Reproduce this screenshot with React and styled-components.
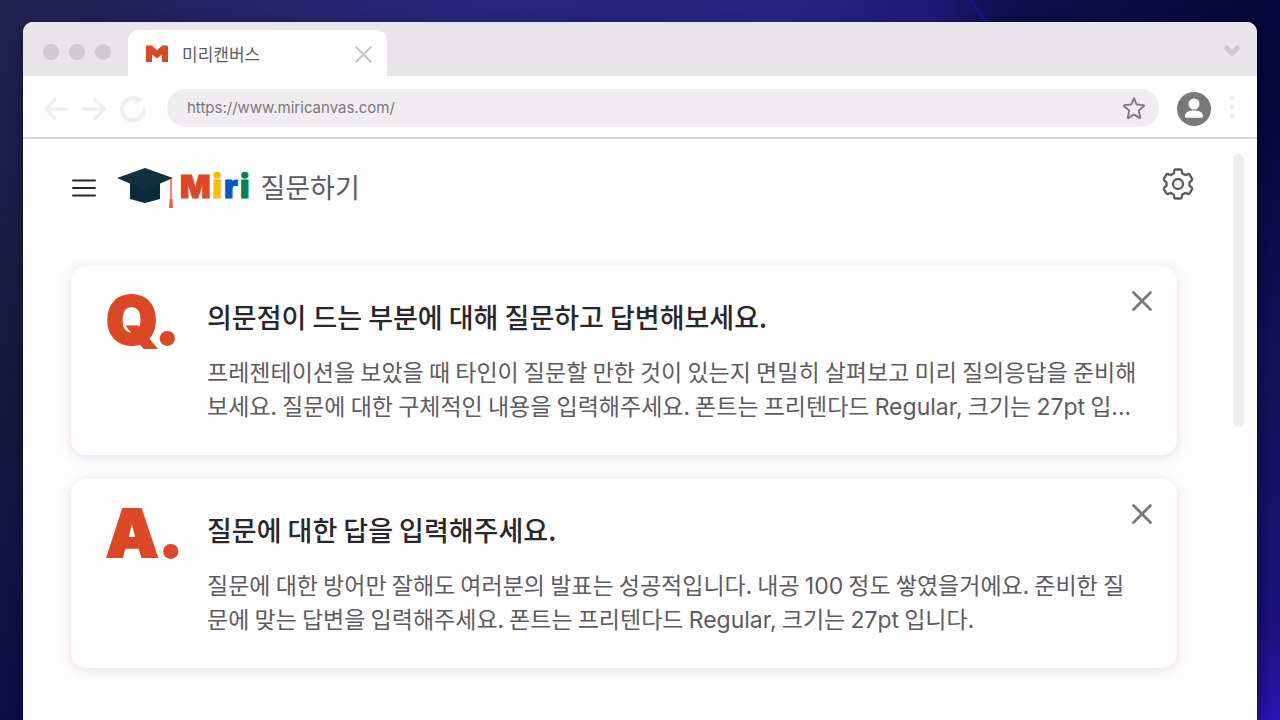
import React from "react";
import styled, { createGlobalStyle } from "styled-components";

const Global = createGlobalStyle`
  * { box-sizing: border-box; }
  html, body, #root { height: 100%; }
  body {
    margin: 0;
    overflow: hidden;
    font-family: "Noto Sans CJK KR", "Noto Sans", sans-serif;
    color: #5d5b60;
  }
  button { border: 0; padding: 0; background: none; cursor: pointer; font: inherit; color: inherit; }
  h1, h2, p { margin: 0; font-weight: 400; }
  svg { display: block; }
`;

const Desktop = styled.div`
  min-height: 100%;
  display: flex;
  overflow: hidden;
  padding: 22px 23px 0;
  background:
    linear-gradient(55deg, transparent 44%, #190e9c 50%, transparent 56%) calc(100% - 285px) 0 / 32px 24px no-repeat,
    linear-gradient(180deg, transparent 100px, #16125c 400px, #1c107c 620px, #2c14b0 720px) 100% 0 / 40px 100% no-repeat,
    linear-gradient(180deg, transparent 40px, #16183e 400px, #100c48 720px) 0 0 / 40px 100% no-repeat,
    linear-gradient(90deg, #20204e 0%, #222058 8%, #28267c 35%, #282480 62%, #1e1874 73%, #10104e 78%, #07073c 97%, #06063e 100%);
`;

const Browser = styled.main`
  flex: 1;
  min-width: 0;
  display: flex;
  flex-direction: column;
  border-radius: 10px 10px 0 0;
  overflow: hidden;
  background: #fefdfe;
  box-shadow: 2px 6px 14px rgba(0, 0, 20, 0.5);
`;

const TabStrip = styled.div`
  height: 54px;
  flex: none;
  display: flex;
  align-items: flex-end;
  padding: 0 16px 0 20px;
  background: #e7e5e8;
`;

const Lights = styled.div`
  display: flex;
  gap: 10px;
  align-self: center;
  padding-top: 6px;
  margin-right: 17px;
`;

const Light = styled.span`
  width: 16px;
  height: 16px;
  border-radius: 50%;
  background: #cdcbce;
`;

const Tab = styled.div`
  width: 259px;
  height: 46px;
  display: flex;
  align-items: center;
  gap: 14px;
  padding: 2px 14px 0 18px;
  border-radius: 10px 10px 0 0;
  background: #fefdfe;
  font-size: 17px;
  line-height: 24px;
`;

const TabTitle = styled.span`
  flex: 1;
`;

const StripMenu = styled.button`
  margin: 0 0 18px auto;
`;

const Toolbar = styled.div`
  height: 63px;
  flex: none;
  display: flex;
  align-items: center;
  padding: 0 22px 0 20px;
  border-bottom: 2px solid #d9d7db;
`;

const NavGroup = styled.nav`
  display: flex;
  gap: 12px;
  margin-right: 20px;
  padding-top: 4px;
`;

const Address = styled.label`
  flex: 1;
  height: 38px;
  margin-top: 2px;
  display: flex;
  align-items: center;
  padding: 0 13px 0 20px;
  border-radius: 19px;
  background: #efedf0;
`;

const AddressInput = styled.input`
  flex: 1;
  min-width: 0;
  border: 0;
  padding: 0;
  outline: 0;
  background: none;
  color: #7a787c;
  font: 400 15px/24px Inter, sans-serif;
`;

const Profile = styled.button`
  margin: 4px 18px 0;
`;

const Content = styled.div`
  flex: 1;
  min-height: 0;
  display: flex;
  align-items: flex-start;
  padding: 15px 13px 0 48px;
`;

const Page = styled.div`
  flex: 1;
  min-width: 0;
`;

const ScrollTrack = styled.div`
  width: 11px;
  height: 273px;
  margin-left: 56px;
  border-radius: 6px;
  background: #efedf0;
`;

const PageHeader = styled.header`
  height: 112px;
  display: flex;
  align-items: flex-start;
  padding-top: 12px;
`;

const MenuButton = styled.button`
  margin: 10px 19px 0 0;
`;

const Brand = styled.h1`
  display: flex;
  align-items: center;
  height: 42px;
  font-size: 27px;
  line-height: 40px;
`;

const Wordmark = styled.span`
  display: flex;
  gap: 2px;
  margin: 0 11px 0 6px;
  font: 900 32px/40px Inter, sans-serif;
`;

const Letter = styled.span`
  color: ${(p) => p.$color};
  -webkit-text-stroke: 1px ${(p) => p.$color};
`;

const SettingsButton = styled.button`
  margin: 1px -18px 0 auto;
`;

const Cards = styled.div`
  display: flex;
  flex-direction: column;
  gap: 24px;
`;

const Card = styled.article`
  min-height: 189px;
  position: relative;
  display: flex;
  padding: 31px 37px 30px 35px;
  border-radius: 15px;
  background: #fefefe;
  box-shadow: 0 2px 14px rgba(50, 30, 80, 0.13);
`;

const Mark = styled.div`
  width: 101px;
  flex: none;
  color: #da4826;
  font: 900 66px/46px Inter, sans-serif;
  -webkit-text-stroke: 2px #da4826;
`;

const CardText = styled.div`
  flex: 1;
  min-width: 0;
`;

const CardTitle = styled.h2`
  margin-bottom: 17px;
  color: #29272c;
  font-size: 27px;
  font-weight: 500;
  line-height: 40px;
`;

const Body = styled.p`
  font-size: 23px;
  line-height: 34px;
`;

const Latin = styled.span`
  font-family: Inter, sans-serif;
  line-height: 1;
`;

const CloseButton = styled.button`
  position: absolute;
  top: 24px;
  right: 24px;
`;

const Cross = ({ size, color, width }) => (
  <svg width={size} height={size} viewBox="0 0 22 22" fill="none" stroke={color} strokeWidth={width} strokeLinecap="round">
    <path d="M2.5 2.5l17 17M19.5 2.5l-17 17" />
  </svg>
);

const wordmark = [
  ["M", "#da4826"],
  ["i", "#fbbc05"],
  ["r", "#0b55c9"],
  ["i", "#0b7d55"],
];

const entries = [
  {
    mark: "Q.",
    title: "의문점이 드는 부분에 대해 질문하고 답변해보세요.",
    body: (
      <>
        프레젠테이션을 보았을 때 타인이 질문할 만한 것이 있는지 면밀히 살펴보고 미리 질의응답을 준비해보세요. 질문에
        대한 구체적인 내용을 입력해주세요. 폰트는 프리텐다드 <Latin>Regular,</Latin> 크기는 <Latin>27pt</Latin> 입
        <Latin>...</Latin>
      </>
    ),
  },
  {
    mark: "A.",
    title: "질문에 대한 답을 입력해주세요.",
    body: (
      <>
        질문에 대한 방어만 잘해도 여러분의 발표는 성공적입니다. 내공 <Latin>100</Latin> 정도 쌓였을거에요. 준비한 질문에
        맞는 답변을 입력해주세요. 폰트는 프리텐다드 <Latin>Regular,</Latin> 크기는 <Latin>27pt</Latin> 입니다.
      </>
    ),
  },
];

export default function App() {
  return (
    <>
      <Global />
      <Desktop>
        <Browser>
          <TabStrip>
            <Lights>
              <Light />
              <Light />
              <Light />
            </Lights>
            <Tab>
              <svg width="22" height="18" viewBox="0 0 22 18" fill="#da4826">
                <path d="M0 1.500Q0 .5 1 .5h5l5 5 5-5h5q1 0 1 1V17h-6V9.500l-5 4-5-4V17H0z" />
              </svg>
              <TabTitle>미리캔버스</TabTitle>
              <button aria-label="탭 닫기">
                <Cross size={19} color="#c9c7ca" width={2.4} />
              </button>
            </Tab>
            <StripMenu aria-label="탭 목록">
              <svg width="18" height="14" viewBox="0 0 18 14" fill="none" stroke="#cdcbce" strokeWidth="5">
                <path d="M2 2.500l7 6.500 7-6.500" />
              </svg>
            </StripMenu>
          </TabStrip>

          <Toolbar>
            <NavGroup>
              <button aria-label="뒤로">
                <svg width="26" height="24" viewBox="0 0 26 24" fill="none" stroke="#efedf0" strokeWidth="3" strokeLinecap="round" strokeLinejoin="round">
                  <path d="M24 12H3M12 2.500L2.500 12l9.500 9.500" />
                </svg>
              </button>
              <button aria-label="앞으로">
                <svg width="26" height="24" viewBox="0 0 26 24" fill="none" stroke="#efedf0" strokeWidth="3" strokeLinecap="round" strokeLinejoin="round">
                  <path d="M2 12h21M14 2.500l9.500 9.500-9.500 9.500" />
                </svg>
              </button>
              <button aria-label="새로고침">
                <svg width="28" height="28" viewBox="0 0 28 28" fill="none" stroke="#efedf0" strokeWidth="4" strokeLinecap="round">
                  <path d="M19.500 4.800A11 11 0 1 0 25 15" />
                  <path d="M15 1.500l7 2-5 5z" fill="#efedf0" strokeWidth="1" />
                </svg>
              </button>
            </NavGroup>
            <Address>
              <AddressInput aria-label="주소" defaultValue="https://www.miricanvas.com/" />
              <svg width="24" height="24" viewBox="0 0 24 24" fill="none" stroke="#7d7b7f" strokeWidth="1.900" strokeLinejoin="round">
                <path d="M12 2.200l2.500 5.900c.1.300.3.400.6.400l6.400.6c.6.100.8.700.3 1.100l-4.800 4.200c-.2.200-.3.400-.2.700l1.400 6.200c.1.600-.4.900-.9.600L12.300 18.600h-.6l-5 3.300c-.5.300-1 0-.9-.6l1.400-6.200c.1-.3 0-.5-.2-.7l-4.800-4.200c-.5-.4-.3-1 .3-1.100l6.400-.6c.3 0 .5-.1.6-.4z" />
              </svg>
            </Address>
            <Profile aria-label="프로필">
              <svg width="34" height="34" viewBox="0 0 34 34">
                <circle cx="17" cy="17" r="17" fill="#7b787c" />
                <circle cx="17" cy="12" r="5.500" fill="#fff" />
                <path d="M8 24.500c0-4 3-6 9-6s9 2 9 6c0 .8-.3 1.200-1 1.200H9c-.7 0-1-.4-1-1.200z" fill="#fff" />
              </svg>
            </Profile>
            <button aria-label="더보기">
              <svg width="6" height="24" viewBox="0 0 6 24" fill="#efedf0">
                <circle cx="3" cy="3" r="2.500" />
                <circle cx="3" cy="12" r="2.500" />
                <circle cx="3" cy="21" r="2.500" />
              </svg>
            </button>
          </Toolbar>

          <Content>
            <Page>
              <PageHeader>
                <MenuButton aria-label="메뉴">
                  <svg width="26" height="24" viewBox="0 0 26 24" stroke="#29272c" strokeWidth="2" strokeLinecap="round">
                    <path d="M2 4.500h22M2 12h22M2 19.500h22" />
                  </svg>
                </MenuButton>
                <Brand>
                  <svg width="58" height="42" viewBox="0 -1 58 42">
                    <path d="M14 14h30v18l-15 4-15-4z" fill="#0c2a3d" />
                    <path d="M29 1l28 10-28 12L1 11z" fill="#10303f" />
                    <path d="M55 12v22" stroke="#fa5a48" strokeWidth="1.500" />
                    <path d="M53.500 32h3l.5 9h-4z" fill="#fa5a48" />
                  </svg>
                  <Wordmark>
                    {wordmark.map(([char, color], i) => (
                      <Letter key={i} $color={color}>
                        {char}
                      </Letter>
                    ))}
                  </Wordmark>
                  질문하기
                </Brand>
                <SettingsButton aria-label="설정">
                  <svg width="34" height="34" viewBox="0 0 34 34" fill="none" stroke="#5d5b60" strokeWidth="2.300" strokeLinejoin="round">
                    <path d="M14.500 2.500h5q1 0 1.200 1l.6 3 2.800 1.600 3-1q1-.3 1.500.5l2.400 4.100q.5.900-.2 1.600l-2.300 2v3.400l2.300 2q.7.700.2 1.600l-2.400 4.100q-.5.800-1.500.5l-3-1-2.800 1.600-.6 3q-.2 1-1.200 1h-5q-1 0-1.200-1l-.6-3-2.800-1.600-3 1q-1 .3-1.500-.5L3 22.300q-.5-.9.200-1.600l2.300-2v-3.400l-2.300-2q-.7-.7-.2-1.600l2.400-4.100q.5-.8 1.500-.5l3 1 2.800-1.600.6-3q.2-1 1.200-1z" />
                    <circle cx="17" cy="17" r="5" />
                  </svg>
                </SettingsButton>
              </PageHeader>
              <Cards>
                {entries.map((entry) => (
                  <Card key={entry.mark}>
                    <Mark>{entry.mark}</Mark>
                    <CardText>
                      <CardTitle>{entry.title}</CardTitle>
                      <Body>{entry.body}</Body>
                    </CardText>
                    <CloseButton aria-label="닫기">
                      <Cross size={22} color="#7b787c" width={2.8} />
                    </CloseButton>
                  </Card>
                ))}
              </Cards>
            </Page>
            <ScrollTrack />
          </Content>
        </Browser>
      </Desktop>
    </>
  );
}
